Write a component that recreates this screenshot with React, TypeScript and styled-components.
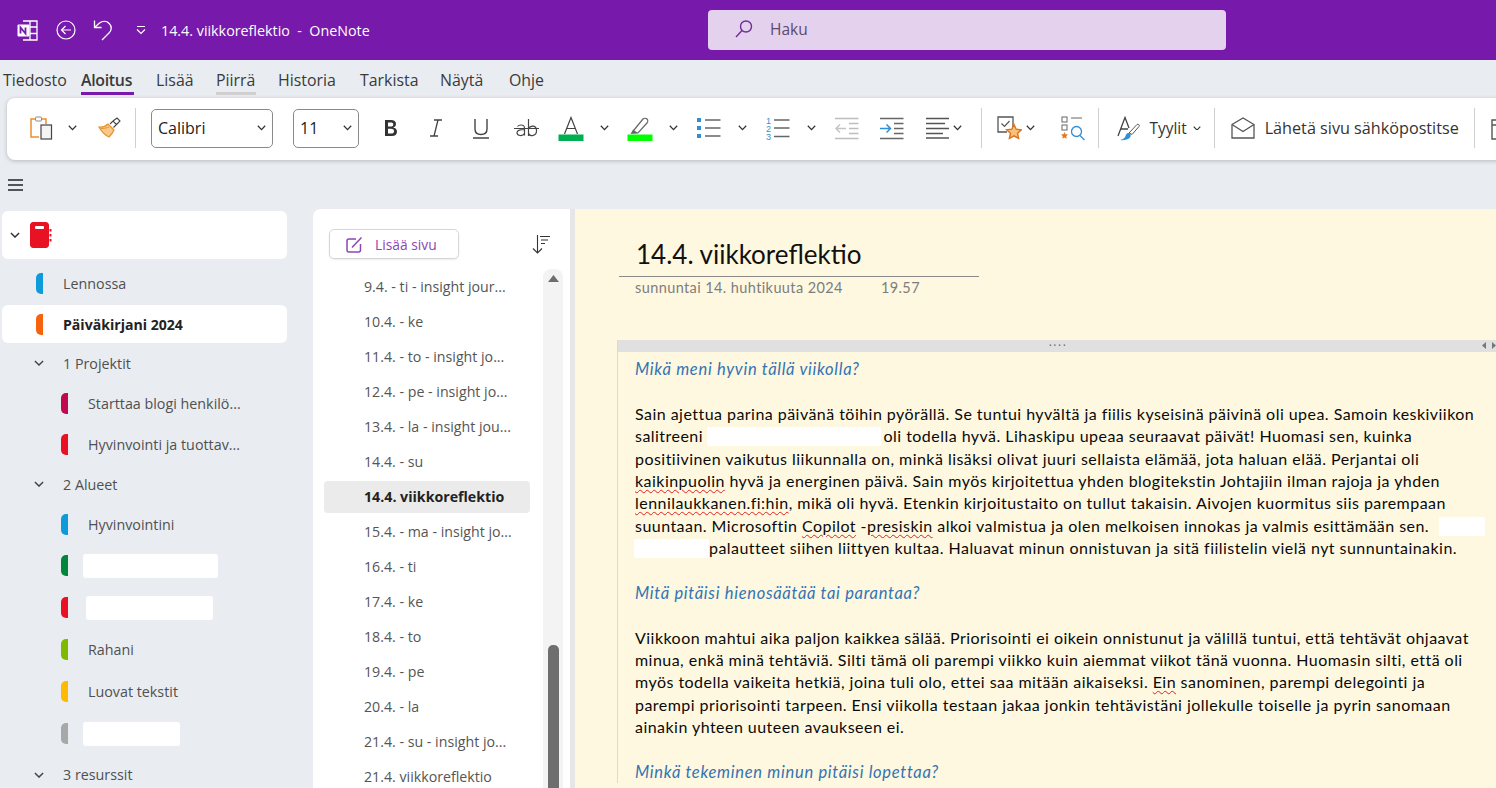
import * as React from 'react'
import styled, { createGlobalStyle } from 'styled-components'

const UI_FONT = `'Open Sans', 'Noto Sans', sans-serif`
const NOTE_FONT = `Lato, 'Open Sans', sans-serif`

const GlobalStyle = createGlobalStyle`
  html, body {
    margin: 0;
    height: 100%;
    overflow: hidden;
    background: #e9edf2;
    font-family: ${UI_FONT};
  }
  * { box-sizing: border-box; }
`

const Page = styled.div`
  width: 1496px;
  height: 788px;
  display: flex;
  flex-direction: column;
  overflow: hidden;
`

const TitleBar = styled.header`
  height: 60px;
  flex: none;
  background: #7719aa;
  display: grid;
  grid-template-columns: 708px 518px 1fr;
  align-items: center;
`

const QuickAccess = styled.div`
  display: flex;
  align-items: center;
  padding-left: 17px;
  color: #fff;
`

const QuickSlot = styled.span<{ $w: number }>`
  width: ${(p) => p.$w}px;
  flex: none;
  display: flex;
`

const DocTitle = styled.span`
  font-size: 14.3px;
  white-space: pre;
`

const SearchBox = styled.div`
  height: 40px;
  background: #e4d1ee;
  border-radius: 4px;
  display: flex;
  align-items: center;
  gap: 16px;
  padding: 0 0 2px 26px;
  font-size: 15.5px;
  color: #5b4a6b;
`

const TabBar = styled.nav`
  height: 38px;
  flex: none;
  display: flex;
  padding-left: 3px;
  align-items: flex-start;
`

const Tab = styled.span<{ $w: number; $mr: number; $active?: boolean; $hover?: boolean }>`
  width: ${(p) => p.$w}px;
  margin-right: ${(p) => p.$mr}px;
  height: 35px;
  padding-top: 7.5px;
  font-size: 15.9px;
  line-height: 24px;
  white-space: nowrap;
  color: #3a3a3a;
  font-weight: ${(p) => (p.$active ? 600 : 400)};
  letter-spacing: ${(p) => (p.$active ? '-0.3px' : '0')};
  border-bottom: 3px solid ${(p) => (p.$active ? '#7719aa' : p.$hover ? '#cfcfcf' : 'transparent')};
`

const Ribbon = styled.section`
  height: 62px;
  flex: none;
  margin-left: 7px;
  width: 1520px;
  background: #fff;
  border-radius: 8px;
  box-shadow: 0 1px 4px rgba(0, 0, 0, 0.22);
  display: flex;
  align-items: center;
  padding: 0 0 2px 16px;
  overflow: hidden;
`

const Tool = styled.span<{ $w: number; $ml?: number }>`
  width: ${(p) => p.$w}px;
  margin-left: ${(p) => p.$ml ?? 0}px;
  flex: none;
  display: flex;
  align-items: center;
  justify-content: center;
  color: #333;
`

const RibbonSep = styled.span<{ $ml: number }>`
  width: 1px;
  height: 40px;
  flex: none;
  margin-left: ${(p) => p.$ml}px;
  background: #d0d0d0;
`

const SelectBox = styled.span<{ $w: number; $ml: number }>`
  width: ${(p) => p.$w}px;
  height: 39px;
  margin-left: ${(p) => p.$ml}px;
  flex: none;
  border: 1px solid #8a8a8a;
  border-radius: 5px;
  display: flex;
  align-items: center;
  justify-content: space-between;
  padding: 0 6px 0 6px;
  font-size: 16px;
  color: #222;
`

const ToolLabel = styled.span<{ $ml: number; $size: number }>`
  margin-left: ${(p) => p.$ml}px;
  flex: none;
  font-size: ${(p) => p.$size}px;
  color: #333;
  white-space: nowrap;
`

const MenuRow = styled.div`
  height: 49px;
  flex: none;
  padding: 19px 0 0 8px;
  display: flex;
  align-items: flex-start;
`

const Workspace = styled.div`
  flex: 1;
  min-height: 0;
  display: flex;
`

const Sidebar = styled.aside`
  width: 313px;
  flex: none;
  padding: 2px 26px 0 2px;
`

const NotebookCard = styled.div`
  height: 48px;
  background: #fff;
  border-radius: 6px;
  display: flex;
  align-items: center;
  padding-left: 8px;
  gap: 10px;
  margin-bottom: 4px;
`

const SectionRow = styled.div<{ $selected?: boolean; $nested?: boolean; $tall?: boolean }>`
  height: ${(p) => (p.$tall ? 42 : 40.3)}px;
  display: flex;
  align-items: center;
  padding-left: ${(p) => (p.$nested ? 59 : 34)}px;
  font-size: 14.3px;
  color: #505050;
  white-space: nowrap;
  font-weight: ${(p) => (p.$selected ? 700 : 400)};
  ${(p) => p.$selected && 'color: #222; background: #fff; border-radius: 6px; height: 38px; margin-top: 2px; font-size: 14.1px;'}
`

const SectionTab = styled.span<{ $color: string }>`
  width: 7px;
  height: 21px;
  flex: none;
  margin-right: 20px;
  background: ${(p) => p.$color};
  border-radius: 5px 0 0 5px;
`

const GroupRow = styled.div`
  height: 40.3px;
  display: flex;
  align-items: center;
  padding-left: 32px;
  gap: 19px;
  font-size: 14.3px;
  color: #505050;
`

const SidebarRedaction = styled.span<{ $w: number; $ml: number }>`
  width: ${(p) => p.$w}px;
  height: 24px;
  margin-left: ${(p) => p.$ml}px;
  background: #fff;
  border-radius: 3px;
`

const PagesPanel = styled.section`
  width: 257px;
  flex: none;
  background: #fff;
  border-radius: 8px 0 0 0;
  display: grid;
  grid-template-columns: 230px 20px;
  grid-template-rows: 60px minmax(0, 1fr);
  overflow: hidden;
`

const PagesHead = styled.div`
  grid-column: 1 / 3;
  display: flex;
  align-items: flex-start;
  justify-content: space-between;
  padding: 20px 12px 0 16px;
`

const AddPage = styled.div`
  width: 130px;
  height: 30px;
  border: 1px solid #d6d6d6;
  border-radius: 5px;
  box-shadow: 0 1px 2px rgba(0, 0, 0, 0.08);
  display: flex;
  align-items: center;
  gap: 12px;
  padding-left: 16px;
  font-size: 13.8px;
  color: #8e44b5;
`

const SortSlot = styled.span`
  margin-top: 6px;
  display: flex;
`

const PageList = styled.div`
  padding: 2px 0 0 11px;
  overflow: hidden;
`

const PageRow = styled.div<{ $selected?: boolean }>`
  height: 32px;
  width: 206px;
  margin-bottom: 3px;
  padding: 0 0 2px 40px;
  display: flex;
  align-items: center;
  font-size: 14.2px;
  white-space: nowrap;
  border-radius: 4px;
  color: ${(p) => (p.$selected ? '#222' : '#555')};
  font-weight: ${(p) => (p.$selected ? 700 : 400)};
  background: ${(p) => (p.$selected ? '#ebebeb' : 'transparent')};
`

const ScrollTrack = styled.div`
  background: #f3f3f3;
  border-radius: 8px 8px 0 0;
  display: flex;
  flex-direction: column;
  align-items: center;
  justify-content: space-between;
  padding-top: 6px;
  width: 20px;
`

const ScrollThumb = styled.div`
  width: 11px;
  height: 143px;
  background: #6e6e6e;
  border-radius: 5px 5px 0 0;
`

const Splitter = styled.div`
  width: 5px;
  flex: none;
  background: #e6e6e6;
`

const NotePage = styled.main`
  flex: 1;
  min-width: 0;
  background: #fff8e0;
  padding: 26px 0 0 44px;
  overflow: hidden;
`

const NoteTitle = styled.h1`
  margin: 0 0 3px 17px;
  font-family: ${NOTE_FONT};
  font-weight: 400;
  font-size: 26px;
  line-height: 38px;
  color: #111;
`

const TitleRule = styled.div`
  width: 360px;
  height: 1px;
  background: #8a8a8a;
`

const NoteDate = styled.div`
  display: flex;
  gap: 38px;
  padding-left: 16px;
  margin-top: 2px;
  font-family: ${NOTE_FONT};
  font-size: 14.5px;
  letter-spacing: 0.4px;
  line-height: 18px;
  color: #7d7d7d;
`

const Outline = styled.div`
  margin: 43px 0 0 -2px;
  width: 881px;
  border-left: 1px solid #d6d9e6;
`

const OutlineBar = styled.div`
  height: 12px;
  background: #e0e0e0;
  position: relative;
  display: flex;
  justify-content: center;
  align-items: center;
  color: #666;
  font-size: 12px;
  line-height: 10px;
  letter-spacing: 1.5px;
`

const OutlineArrows = styled.span`
  position: absolute;
  right: 2px;
  top: 2px;
  display: flex;
  gap: 6px;
`

const OutlineBody = styled.div`
  padding: 6px 0 0 17px;
  font-family: ${NOTE_FONT};
  font-size: 16px;
  letter-spacing: 0.46px;
  line-height: 22.4px;
  color: #0a0a0a;
`

const Line = styled.div`
  height: 22.4px;
  white-space: nowrap;
`

const Heading = styled(Line)`
  color: #3273b4;
  font-style: italic;
  font-size: 16.5px;
  letter-spacing: 0.7px;
`

const Spell = styled.span`
  text-decoration: underline wavy #e02020 1px;
  text-underline-offset: 2px;
`

const Redaction = styled.span<{ $w: number; $ml?: number; $mr?: number }>`
  display: inline-block;
  width: ${(p) => p.$w}px;
  height: 19px;
  margin-left: ${(p) => p.$ml ?? 0}px;
  margin-right: ${(p) => p.$mr ?? 0}px;
  vertical-align: -4px;
  background: #fff;
  border-radius: 2px;
`

const Chevron = ({ size = 9, color = '#333' }: { size?: number; color?: string }) => (
  <svg width={size} height={size * 0.62} viewBox="0 0 9 5.6" fill="none">
    <path d="M.8.8 4.500 4.600 8.200.8" stroke={color} strokeWidth="1.300" />
  </svg>
)

const OneNoteLogo = () => (
  <svg width="21" height="21" viewBox="0 0 21 21" fill="none">
    <path d="M6 1h14v19H6" stroke="#fff" strokeWidth="1.300" />
    <path d="M13 1v19M13 7h7M13 13.500h7" stroke="#fff" strokeWidth="1.300" />
    <rect x="0.500" y="4.500" width="12" height="12" rx="1" fill="#fff" />
    <path d="M3.500 13.500v-6l5 6v-6" stroke="#7719aa" strokeWidth="1.800" />
  </svg>
)

const BackIcon = () => (
  <svg width="20" height="20" viewBox="0 0 20 20" fill="none" stroke="#fff" strokeWidth="1.200">
    <circle cx="10" cy="10" r="9" />
    <path d="M15 10H5.500M9.500 6l-4 4 4 4" />
  </svg>
)

const UndoIcon = () => (
  <svg width="20" height="22" viewBox="0 0 20 22" fill="none" stroke="#fff" strokeWidth="1.300">
    <path d="M1.500 1.500v7h7" />
    <path d="M1.500 8.500 6.500 4c3-2.200 7-2.200 9.700.5 3 3 2.400 7-.2 9.500L9 21" />
  </svg>
)

const QatIcon = () => (
  <svg width="10" height="10" viewBox="0 0 10 10" fill="none" stroke="#fff" strokeWidth="1.100">
    <path d="M1 1.500h8M1 4.500l4 4 4-4" />
  </svg>
)

const SearchIcon = () => (
  <svg width="20" height="20" viewBox="0 0 20 20" fill="none" stroke="#6b2f96" strokeWidth="1.400">
    <circle cx="12" cy="7.500" r="5.500" />
    <path d="M8 11.500 2 18" />
  </svg>
)

const PasteIcon = () => (
  <svg width="23" height="24" viewBox="0 0 23 24" fill="none">
    <path d="M5.500 3H1v18h8" stroke="#e8912d" strokeWidth="1.500" />
    <path d="M11 3h5v5" stroke="#e8912d" strokeWidth="1.500" />
    <rect x="5.500" y="1" width="6" height="4" rx="1" fill="#fff" stroke="#8a8a8a" />
    <rect x="11" y="9" width="10.500" height="14" fill="#f4f4f4" stroke="#444" strokeWidth="1.200" />
  </svg>
)

const PainterIcon = () => (
  <svg width="23" height="22" viewBox="0 0 23 22" fill="none">
    <path d="M1 10c4 .5 7-1 9-3l6 6c-1 2.500-3 5-5 7-4-2-8-6-10-10Z" fill="#f8c98a" stroke="#e8912d" strokeWidth="1.200" />
    <path d="M3 11.500c3 0 6-.5 8-1.500" stroke="#e8912d" />
    <path d="m12 7 3-3 3.500 3.500-3 3M15 4l4-3 3 3-3.500 3.500" fill="#fff" stroke="#444" strokeWidth="1.100" />
  </svg>
)

const LetterA = ({ bar }: { bar: string }) => (
  <svg width="26" height="25" viewBox="0 0 26 25" fill="none">
    <path d="M6.500 18 13 1.500 19.500 18M8.500 12.500h9" stroke="#444" strokeWidth="1.200" />
    <rect x="0.500" y="18.500" width="25" height="6.500" fill={bar} />
  </svg>
)

const HighlightIcon = () => (
  <svg width="26" height="25" viewBox="0 0 26 25" fill="none">
    <path d="m7 14 9-11c1-1 3-1 4 0s1 3 0 4L11 17H6Z" fill="#fff" stroke="#666" strokeWidth="1.200" />
    <path d="M3.500 18 6 13.500 11 17Z" fill="#666" />
    <rect x="0.500" y="18.500" width="25" height="6.500" fill="#00ff00" />
  </svg>
)

const BulletsIcon = () => (
  <svg width="24" height="22" viewBox="0 0 24 22">
    <rect x="0" y="1" width="4" height="4" fill="#2f8fd6" />
    <rect x="0" y="9" width="4" height="4" fill="#2f8fd6" />
    <rect x="0" y="17" width="4" height="4" fill="#2f8fd6" />
    <path d="M8 3h15.500M8 11h15.500M8 19h15.500" stroke="#666" strokeWidth="1.500" />
  </svg>
)

const NumberedIcon = () => (
  <svg width="24" height="28" viewBox="0 0 24 28">
    <text x="0" y="10" fontSize="9" fontFamily="Liberation Sans" fill="#2f8fd6">1</text>
    <text x="0" y="18" fontSize="9" fontFamily="Liberation Sans" fill="#2f8fd6">2</text>
    <text x="0" y="25.500" fontSize="9" fontFamily="Liberation Sans" fill="#2f8fd6">3</text>
    <path d="M8 6h15.500M8 14h15.500M8 22.500h15.500" stroke="#666" strokeWidth="1.500" />
  </svg>
)

const IndentIcon = ({ out }: { out?: boolean }) => {
  const line = out ? '#bdbdbd' : '#666'
  const arrow = out ? '#c4c4c4' : '#2f8fd6'
  return (
    <svg width="24" height="23" viewBox="0 0 24 23" fill="none">
      <path d="M0 1.500h23.500M0 21.500h23.500" stroke={line} strokeWidth="1.500" />
      <path d="M14 6.500h9.500M14 11.500h9.500M14 16.500h9.500" stroke={line} strokeWidth="1.300" />
      {out ? (
        <path d="M11 11.500H1M5 7.500l-4 4 4 4" stroke={arrow} strokeWidth="1.500" />
      ) : (
        <path d="M0 11.500h10.500M6.500 7.500l4 4-4 4" stroke={arrow} strokeWidth="1.500" />
      )}
    </svg>
  )
}

const AlignIcon = () => (
  <svg width="23" height="22" viewBox="0 0 23 22" fill="none" stroke="#555" strokeWidth="1.400">
    <path d="M0 1.500h23M0 6.500h19M0 11.500h23M0 16.500h17M0 21h23" />
  </svg>
)

const TagIcon = () => (
  <svg width="25" height="25" viewBox="0 0 25 25" fill="none">
    <path d="M16 13V1H1v15h9" stroke="#555" strokeWidth="1.300" />
    <path d="m4.500 7.500 3 3 5-5.500" stroke="#555" strokeWidth="1.200" />
    <path d="m17 8.500 2.200 4.700 5.200.6-3.800 3.500 1 5.200-4.600-2.600-4.600 2.600 1-5.200-3.800-3.500 5.200-.6Z" fill="#f6c27a" stroke="#e0701a" strokeWidth="1.400" />
  </svg>
)

const FindTagsIcon = () => (
  <svg width="24" height="25" viewBox="0 0 24 25" fill="none">
    <rect x="1" y="1" width="5" height="5" stroke="#666" />
    <path d="M10 2h11" stroke="#666" strokeWidth="1.200" />
    <rect x="1" y="9" width="5" height="5" stroke="#666" />
    <path d="m3.500 16 1 2.200 2.500.3-1.800 1.700.5 2.600-2.200-1.300-2.200 1.300.5-2.600L0 18.500l2.500-.3Z" fill="#e8771a" />
    <circle cx="15.500" cy="15.500" r="5" stroke="#2f8fd6" strokeWidth="1.300" />
    <path d="m19 19.500 4.500 4.500" stroke="#2f8fd6" strokeWidth="1.300" />
  </svg>
)

const StylesIcon = () => (
  <svg width="23" height="25" viewBox="0 0 23 25" fill="none">
    <path d="M1 20 8 1.500 12 12M4 13h7" stroke="#444" strokeWidth="1.300" />
    <path d="M12 17 20 8.500c1-1 3 .5 2 2l-7 8Z" fill="#fff" stroke="#555" />
    <path d="M3 24c3 .5 8 0 10-2.500 1.500-2 .5-4-1-4.500-2-.5-3 1-3.500 3-.5 2-2.500 3.500-5.500 4Z" fill="#2f8fd6" />
  </svg>
)

const MailIcon = () => (
  <svg width="24" height="22" viewBox="0 0 24 22" fill="none" stroke="#555" strokeWidth="1.300">
    <path d="M1 7.500 12 1l11 6.500V21H1Z" />
    <path d="m1 7.500 11 7 11-7" />
  </svg>
)

const CalendarIcon = () => (
  <svg width="24" height="24" viewBox="0 0 24 24" fill="none" stroke="#555" strokeWidth="1.400">
    <path d="M1 4h22v19H1ZM6 1v6M18 1v6M1 9h22" />
  </svg>
)

const HamburgerIcon = () => (
  <svg width="15" height="12" viewBox="0 0 15 12" fill="none" stroke="#222" strokeWidth="1.600">
    <path d="M0 1h15M0 6h15M0 11h15" />
  </svg>
)

const NotebookIcon = () => (
  <svg width="22" height="26" viewBox="0 0 22 26">
    <path d="M3 0h13c1.500 0 3 1.500 3 3v20c0 1.500-1.500 3-3 3H3c-1.500 0-3-1.500-3-3V3c0-1.500 1.500-3 3-3Z" fill="#e81224" />
    <rect x="5" y="4" width="9" height="3" rx="1" fill="#fff" />
    <path d="M20.500 7v2.500M20.500 12v2.500M20.500 17v2.500" stroke="#e81224" strokeWidth="2" />
  </svg>
)

const AddPageIcon = () => (
  <svg width="17" height="17" viewBox="0 0 17 17" fill="none" stroke="#8e44b5" strokeWidth="1.500">
    <path d="M14.500 8v6a2 2 0 0 1-2 2H3a2 2 0 0 1-2-2V5a2 2 0 0 1 2-2h7" />
    <path d="M6 11.500 15.500 1.500" />
  </svg>
)

const SortIcon = () => (
  <svg width="19" height="19" viewBox="0 0 19 19" fill="none" stroke="#333" strokeWidth="1.100">
    <path d="M5.500 0v18M1 13.500 5.500 18l4.500-4.500" />
    <path d="M8 1.500h10M9 5h7M9 8.500h4" />
  </svg>
)

const ScrollUpIcon = () => (
  <svg width="11" height="7" viewBox="0 0 11 7">
    <path d="M5.500 0 11 7H0Z" fill="#6e6e6e" />
  </svg>
)

const OutlineArrow = ({ right }: { right?: boolean }) => (
  <svg width="4" height="7" viewBox="0 0 4 7">
    <path d={right ? 'M0 0 4 3.500 0 7Z' : 'M4 0 0 3.500 4 7Z'} fill="#777" />
  </svg>
)

type Section = { label?: string; color: string; nested?: boolean; selected?: boolean; tall?: boolean; blank?: [number, number] }

const topSections: Section[] = [
  { label: 'Lennossa', color: '#0f9ad9' },
  { label: 'Päiväkirjani 2024', color: '#f7630c', selected: true },
]
const projectSections: Section[] = [
  { label: 'Starttaa blogi henkilö...', color: '#bf0a52', nested: true },
  { label: 'Hyvinvointi ja tuottav...', color: '#e81224', nested: true },
]
const areaSections: Section[] = [
  { label: 'Hyvinvointini', color: '#0f9ad9', nested: true },
  { color: '#00873c', nested: true, tall: true, blank: [135, -5] },
  { color: '#e81224', nested: true, tall: true, blank: [127, -2] },
  { label: 'Rahani', color: '#7fba00', nested: true, tall: true },
  { label: 'Luovat tekstit', color: '#ffb900', nested: true, tall: true },
  { color: '#a8a8a8', nested: true, tall: true, blank: [97, -5] },
]

const pages = [
  '9.4. - ti - insight jour...',
  '10.4. - ke',
  '11.4. - to - insight jo...',
  '12.4. - pe - insight jo...',
  '13.4. - la - insight jou...',
  '14.4. - su',
  '14.4. viikkoreflektio',
  '15.4. - ma - insight jo...',
  '16.4. - ti',
  '17.4. - ke',
  '18.4. - to',
  '19.4. - pe',
  '20.4. - la',
  '21.4. - su - insight jo...',
  '21.4. viikkoreflektio',
]

const tabs: { label: string; w: number; mr: number }[] = [
  { label: 'Tiedosto', w: 65, mr: 13 },
  { label: 'Aloitus', w: 53, mr: 22 },
  { label: 'Lisää', w: 36, mr: 24 },
  { label: 'Piirrä', w: 40, mr: 22 },
  { label: 'Historia', w: 58, mr: 24 },
  { label: 'Tarkista', w: 56, mr: 24 },
  { label: 'Näytä', w: 45, mr: 24 },
  { label: 'Ohje', w: 36, mr: 0 },
]

const renderSection = (s: Section, i: number) => (
  <SectionRow key={i} $nested={s.nested} $selected={s.selected} $tall={s.tall}>
    <SectionTab $color={s.color} />
    {s.blank ? <SidebarRedaction $w={s.blank[0]} $ml={s.blank[1]} /> : s.label}
  </SectionRow>
)

const App: React.FC = () => (
  <Page>
    <GlobalStyle />
    <TitleBar>
      <QuickAccess>
        <QuickSlot $w={39}><OneNoteLogo /></QuickSlot>
        <QuickSlot $w={37}><BackIcon /></QuickSlot>
        <QuickSlot $w={43}><UndoIcon /></QuickSlot>
        <QuickSlot $w={25}><QatIcon /></QuickSlot>
        <DocTitle>14.4. viikkoreflektio  -  OneNote</DocTitle>
      </QuickAccess>
      <SearchBox>
        <SearchIcon />
        Haku
      </SearchBox>
    </TitleBar>

    <TabBar>
      {tabs.map((t) => (
        <Tab key={t.label} $w={t.w} $mr={t.mr} $active={t.label === 'Aloitus'} $hover={t.label === 'Piirrä'}>{t.label}</Tab>
      ))}
    </TabBar>

    <Ribbon>
      <Tool $w={36}><PasteIcon /></Tool>
      <Tool $w={26}><Chevron /></Tool>
      <Tool $w={48}><PainterIcon /></Tool>
      <RibbonSep $ml={2} />
      <SelectBox $w={122} $ml={15}>Calibri<Chevron /></SelectBox>
      <SelectBox $w={66} $ml={20}>11<Chevron /></SelectBox>
      <Tool $w={45} $ml={9.5}>
        <svg width="16" height="18" viewBox="0 0 16 18" fill="none">
          <path d="M2 1h6c3 0 5 1.200 5 4 0 2-1 3-3 3.600 2.500.4 4 1.800 4 4.200C14 15.600 12 17 9 17H2Zm3 2.400v4.200h2.500C9.500 7.600 10.300 6.800 10.300 5.400 10.300 4 9.300 3.400 7.500 3.400Zm0 6.400v4.800h3c2 0 3-.8 3-2.400 0-1.600-1.200-2.400-3.200-2.400Z" fill="#333" />
        </svg>
      </Tool>
      <Tool $w={45}>
        <svg width="14" height="18" viewBox="0 0 14 18" fill="none" stroke="#444" strokeWidth="1.300">
          <path d="M5 1h8M1 17h8M9 1 5 17" />
        </svg>
      </Tool>
      <Tool $w={45}>
        <svg width="16" height="21" viewBox="0 0 16 21" fill="none" stroke="#444" strokeWidth="1.400">
          <path d="M2 1v10c0 3.500 2.200 5.500 6 5.500s6-2 6-5.500V1M0 20h16" />
        </svg>
      </Tool>
      <Tool $w={45}>
        <svg width="25" height="18" viewBox="0 0 25 18" fill="none" stroke="#444" strokeWidth="1.200">
          <path d="M0 9.500h25" />
          <path d="M10.500 16.500V9c0-2-1.500-3-3.500-3-1.500 0-2.700.5-3.500 1.500M10.500 10.500c-4 0-7.500.5-7.500 3.300 0 3.400 6 3.600 7.500.7M14.500 0v17M14.500 10c1-3 7.500-5 8 1.200.4 6-6.500 7-8 3" />
        </svg>
      </Tool>
      <Tool $w={45}><LetterA bar="#00b050" /></Tool>
      <Tool $w={21}><Chevron /></Tool>
      <Tool $w={45} $ml={3}><HighlightIcon /></Tool>
      <Tool $w={21}><Chevron /></Tool>
      <Tool $w={45} $ml={3}><BulletsIcon /></Tool>
      <Tool $w={21}><Chevron /></Tool>
      <Tool $w={45} $ml={3}><NumberedIcon /></Tool>
      <Tool $w={21}><Chevron /></Tool>
      <Tool $w={45} $ml={3}><IndentIcon out /></Tool>
      <Tool $w={45}><IndentIcon /></Tool>
      <Tool $w={25} $ml={10}><AlignIcon /></Tool>
      <Tool $w={16}><Chevron /></Tool>
      <RibbonSep $ml={15} />
      <Tool $w={26} $ml={15}><TagIcon /></Tool>
      <Tool $w={16}><Chevron /></Tool>
      <Tool $w={24} $ml={22}><FindTagsIcon /></Tool>
      <RibbonSep $ml={13} />
      <Tool $w={23} $ml={18}><StylesIcon /></Tool>
      <ToolLabel $ml={10} $size={15.4}>Tyylit</ToolLabel>
      <Tool $w={12} $ml={4}><Chevron size={8} /></Tool>
      <RibbonSep $ml={11} />
      <Tool $w={24} $ml={16}><MailIcon /></Tool>
      <ToolLabel $ml={10} $size={16.2}>Lähetä sivu sähköpostitse</ToolLabel>
      <RibbonSep $ml={15} />
      <Tool $w={24} $ml={16}><CalendarIcon /></Tool>
    </Ribbon>

    <MenuRow><HamburgerIcon /></MenuRow>

    <Workspace>
      <Sidebar>
        <NotebookCard>
          <Chevron size={10} />
          <NotebookIcon />
        </NotebookCard>
        {topSections.map(renderSection)}
        <GroupRow><Chevron size={10} color="#444" />1 Projektit</GroupRow>
        {projectSections.map(renderSection)}
        <GroupRow><Chevron size={10} color="#444" />2 Alueet</GroupRow>
        {areaSections.map(renderSection)}
        <GroupRow><Chevron size={10} color="#444" />3 resurssit</GroupRow>
      </Sidebar>

      <PagesPanel>
        <PagesHead>
          <AddPage><AddPageIcon />Lisää sivu</AddPage>
          <SortSlot><SortIcon /></SortSlot>
        </PagesHead>
        <PageList>
          {pages.map((p, i) => (
            <PageRow key={p} $selected={i === 6}>{p}</PageRow>
          ))}
        </PageList>
        <ScrollTrack>
          <ScrollUpIcon />
          <ScrollThumb />
        </ScrollTrack>
      </PagesPanel>

      <Splitter />

      <NotePage>
        <NoteTitle>14.4. viikkoreflektio</NoteTitle>
        <TitleRule />
        <NoteDate>
          <span>sunnuntai 14. huhtikuuta 2024</span>
          <span>19.57</span>
        </NoteDate>
        <Outline>
          <OutlineBar>
            ····
            <OutlineArrows><OutlineArrow /><OutlineArrow right /></OutlineArrows>
          </OutlineBar>
          <OutlineBody>
            <Heading>Mikä meni hyvin tällä viikolla?</Heading>
            <Line />
            <Line>Sain ajettua parina päivänä töihin pyörällä. Se tuntui hyvältä ja fiilis kyseisinä päivinä oli upea. Samoin keskiviikon</Line>
            <Line>salitreeni <Redaction $w={174} $ml={-1} $mr={3} />oli todella hyvä. Lihaskipu upeaa seuraavat päivät! Huomasi sen, kuinka</Line>
            <Line>positiivinen vaikutus liikunnalla on, minkä lisäksi olivat juuri sellaista elämää, jota haluan elää. Perjantai oli</Line>
            <Line><Spell>kaikinpuolin</Spell> hyvä ja energinen päivä. Sain myös kirjoitettua yhden blogitekstin Johtajiin ilman rajoja ja yhden</Line>
            <Line><Spell>lennilaukkanen.fi:hin</Spell>, mikä oli hyvä. Etenkin kirjoitustaito on tullut takaisin. Aivojen kuormitus siis parempaan</Line>
            <Line>suuntaan. Microsoftin <Spell>Copilot</Spell> -<Spell>presiskin</Spell> alkoi valmistua ja olen melkoisen innokas ja valmis esittämään sen. <Redaction $w={46} $ml={5} /></Line>
            <Line><Redaction $w={75} $ml={-1} />palautteet siihen liittyen kultaa. Haluavat minun onnistuvan ja sitä fiilistelin vielä nyt sunnuntainakin.</Line>
            <Line />
            <Heading>Mitä pitäisi hienosäätää tai parantaa?</Heading>
            <Line />
            <Line>Viikkoon mahtui aika paljon kaikkea sälää. Priorisointi ei oikein onnistunut ja välillä tuntui, että tehtävät ohjaavat</Line>
            <Line>minua, enkä minä tehtäviä. Silti tämä oli parempi viikko kuin aiemmat viikot tänä vuonna. Huomasin silti, että oli</Line>
            <Line>myös todella vaikeita hetkiä, joina tuli olo, ettei saa mitään aikaiseksi. <Spell>Ein</Spell> sanominen, parempi delegointi ja</Line>
            <Line>parempi priorisointi tarpeen. Ensi viikolla testaan jakaa jonkin tehtävistäni jollekulle toiselle ja pyrin sanomaan</Line>
            <Line>ainakin yhteen uuteen avaukseen ei.</Line>
            <Line />
            <Heading>Minkä tekeminen minun pitäisi lopettaa?</Heading>
          </OutlineBody>
        </Outline>
      </NotePage>
    </Workspace>
  </Page>
)

export default App
